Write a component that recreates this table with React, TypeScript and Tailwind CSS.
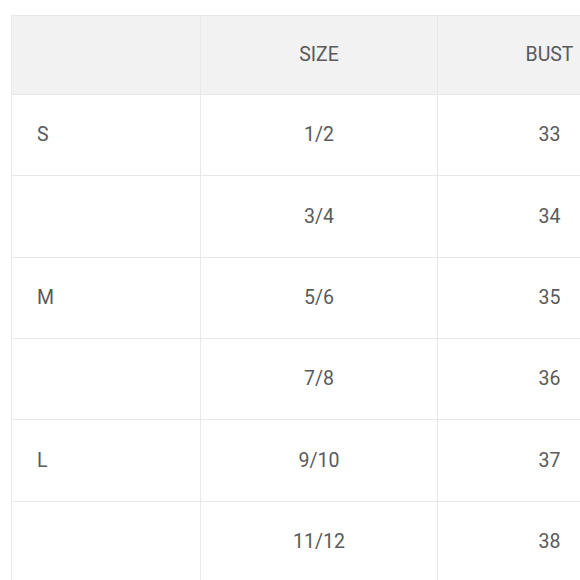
import React from "react";

const rows = [
  { label: "S", size: "1/2", bust: "33", h: "h-[81px]" },
  { label: "", size: "3/4", bust: "34", h: "h-[82px]" },
  { label: "M", size: "5/6", bust: "35", h: "h-[81px]" },
  { label: "", size: "7/8", bust: "36", h: "h-[81px]" },
  { label: "L", size: "9/10", bust: "37", h: "h-[82px]" },
  { label: "", size: "11/12", bust: "38", h: "h-[81px]" },
];

const App = () => {
  return (
    <div className="w-[580px] h-[580px] overflow-hidden bg-white pl-[11px] pt-[15px]" style={{ fontFamily: "Roboto, 'Liberation Sans', sans-serif" }}>
      <table className="border-collapse table-fixed w-[650px] text-[19.5px] text-[#5a5a5a]">
        <colgroup>
          <col className="w-[189px]" />
          <col className="w-[237px]" />
          <col className="w-[224px]" />
        </colgroup>
        <thead>
          <tr className="h-[79px] bg-[#f2f2f2]">
            <th className="border border-[#e8e8e8] font-normal"></th>
            <th className="border border-[#e8e8e8] font-normal text-center">SIZE</th>
            <th className="border border-[#e8e8e8] font-normal text-center">BUST</th>
          </tr>
        </thead>
        <tbody>
          {rows.map((r, i) => (
            <tr key={i} className={r.h}>
              <td className="border border-[#e8e8e8] pl-[25px]">{r.label}</td>
              <td className="border border-[#e8e8e8] text-center">{r.size}</td>
              <td className="border border-[#e8e8e8] text-center">{r.bust}</td>
            </tr>
          ))}
        </tbody>
      </table>
    </div>
  );
};

export default App;
